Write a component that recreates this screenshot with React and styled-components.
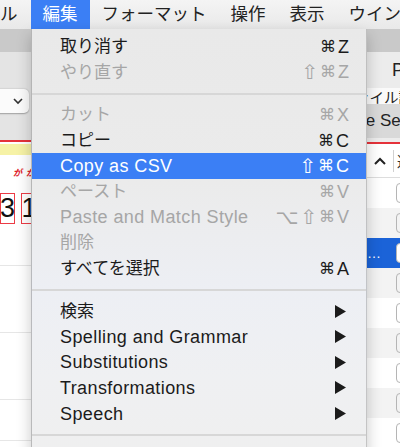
import styled, { createGlobalStyle } from 'styled-components'

const GlobalStyle = createGlobalStyle`
  html, body {
    margin: 0;
    padding: 0;
    overflow: hidden;
  }
  body {
    font-family: "Liberation Sans", "Noto Sans CJK JP", sans-serif;
    background: #ffffff;
  }
`

const blue = '#3b7ff5'

const Screen = styled.div`
  position: relative;
  width: 400px;
  height: 447px;
  overflow: hidden;
  display: flex;
  flex-direction: column;
`

// ---- barre de menu du haut
const MenuBar = styled.div`
  height: 29px;
  flex: none;
  display: flex;
  background: linear-gradient(#f4f4f4, #e9e9e9);
  white-space: nowrap;
`

const MenuTitle = styled.div`
  display: flex;
  align-items: center;
  padding: ${(props) => (props.$first ? '0 13px 0 0' : '0 12px')};
  font-size: 17.5px;
  line-height: 1;
  color: #222;
  ${(props) => props.$active && `background: ${blue}; color: #fff;`}
`

// ---- fenetre en arriere plan
const Window = styled.div`
  flex: 1;
  display: flex;
  min-height: 0;
`

const Column = styled.div`
  width: ${(props) => props.$width}px;
  flex: none;
  display: flex;
  flex-direction: column;
  overflow: hidden;
`

const Middle = styled.div`
  flex: 1;
  background: #eeeeee;
`

const Band = styled.div`
  height: ${(props) => props.$h}px;
  flex: none;
  background: ${(props) => props.$bg || 'transparent'};
  display: flex;
  align-items: center;
  overflow: hidden;
  white-space: nowrap;
  & > * {
    flex: none;
  }
`

const Dropdown = styled.div`
  width: 23px;
  height: 24px;
  margin-left: -8px;
  margin-top: 10px;
  padding-left: 8px;
  box-sizing: content-box;
  background: #fbfbfb;
  border-radius: 5px;
  box-shadow: 0 0.5px 1.5px rgba(0, 0, 0, 0.3);
  display: flex;
  align-items: center;
  justify-content: flex-end;
  padding-right: 6px;
`

const RedLine = styled.div`
  height: 2px;
  flex: none;
  background: #e5323a;
`

const RedHint = styled.span`
  font-size: 9px;
  font-weight: bold;
  font-style: italic;
  color: #e0202a;
  margin-left: ${(props) => props.$ml}px;
`

const CellBox = styled.div`
  width: ${(props) => props.$w}px;
  height: 29px;
  margin-left: ${(props) => props.$ml}px;
  border: 1.5px solid #ec3b45;
  display: flex;
  align-items: center;
  justify-content: center;
  font-size: 27px;
  color: #111;
`

const RowLine = styled.div`
  height: ${(props) => props.$h}px;
  flex: none;
  border-bottom: 1px solid #e6e6e6;
  background: #fff;
`

const SideText = styled.span`
  font-size: ${(props) => props.$size}px;
  color: #222;
  margin-left: ${(props) => props.$ml}px;
`

const HeaderCell = styled.div`
  height: 33px;
  flex: none;
  display: flex;
  align-items: center;
  background: #fff;
  border-bottom: 1px solid #dddddd;
  font-size: 15px;
  color: #333;
  white-space: nowrap;
  & > * {
    flex: none;
  }
`

const Caret = styled.svg`
  margin-left: 7px;
`

const HeaderDivider = styled.div`
  width: 1px;
  height: 22px;
  background: #d0d0d0;
  margin: 0 3px 0 7px;
`

const TableRow = styled.div`
  height: 30px;
  flex: none;
  display: flex;
  align-items: center;
  justify-content: space-between;
  background: ${(props) =>
    props.$selected ? '#1b63d8' : props.$odd ? '#f3f3f3' : '#ffffff'};
  color: #fff;
  font-size: 14px;
`

const Check = styled.div`
  width: 14px;
  height: 18px;
  margin-right: -12px;
  border: 1px solid #b5b5b5;
  border-radius: 4px;
  background: ${(props) => (props.$selected ? '#ffffff' : 'transparent')};
`

// ---- menu deroulant
const Menu = styled.div`
  position: absolute;
  left: 31px;
  top: 29px;
  width: 336px;
  bottom: -20px;
  padding-top: 5px;
  box-sizing: border-box;
  background: linear-gradient(#e9e9e9 0%, #ebebeb 35%, #edeff4 60%, #eff0f2 80%, #efefef 100%);
  border-left: 1px solid rgba(0, 0, 0, 0.22);
  border-right: 1px solid rgba(0, 0, 0, 0.18);
  box-shadow: 0 6px 14px rgba(0, 0, 0, 0.22);
`

const Item = styled.div`
  height: 25.6px;
  display: flex;
  align-items: center;
  justify-content: space-between;
  padding: 0 17px 0 28px;
  color: ${(props) => (props.$disabled ? '#a6a6a6' : '#1b1b1b')};
  ${(props) => props.$active && `background: ${blue}; color: #fff;`}
  white-space: nowrap;
`

const Label = styled.span`
  font-size: ${(props) => (props.$cjk ? '17px' : '18px')};
  letter-spacing: ${(props) => (props.$cjk ? '0' : '0.4px')};
  line-height: 1;
`

const Keys = styled.span`
  display: flex;
  align-items: center;
  gap: 2px;
  line-height: 1;
`

const Sym = styled.span`
  font-family: "DejaVu Sans", sans-serif;
  font-size: ${(props) => (props.$big ? '20px' : '16px')};
`

const Letter = styled.span`
  font-size: 18px;
`

const Separator = styled.div`
  height: 17px;
  display: flex;
  align-items: center;
  &::after {
    content: '';
    flex: 1;
    height: 2px;
    background: #d7d7d7;
  }
`

const Arrow = styled.svg`
  margin-right: 3px;
`

function Shortcut({ keys }) {
  return (
    <Keys>
      {keys.split('').map((k, i) =>
        /[A-Z]/.test(k) ? (
          <Letter key={i}>{k}</Letter>
        ) : (
          <Sym key={i} $big={k !== '⌘'}>
            {k}
          </Sym>
        )
      )}
    </Keys>
  )
}

const items = [
  { label: '取り消す', keys: '⌘Z' },
  { label: 'やり直す', keys: '⇧⌘Z', disabled: true },
  { sep: true },
  { label: 'カット', keys: '⌘X', disabled: true },
  { label: 'コピー', keys: '⌘C' },
  { label: 'Copy as CSV', keys: '⇧⌘C', active: true },
  { label: 'ペースト', keys: '⌘V', disabled: true },
  { label: 'Paste and Match Style', keys: '⌥⇧⌘V', disabled: true },
  { label: '削除', disabled: true },
  { label: 'すべてを選択', keys: '⌘A' },
  { sep: true },
  { label: '検索', sub: true },
  { label: 'Spelling and Grammar', sub: true },
  { label: 'Substitutions', sub: true },
  { label: 'Transformations', sub: true },
  { label: 'Speech', sub: true },
  { sep: true },
  { label: '自動入力を開始' },
]

function EditMenu() {
  return (
    <Menu>
      {items.map((it, i) =>
        it.sep ? (
          <Separator key={i} />
        ) : (
          <Item key={i} $disabled={it.disabled} $active={it.active}>
            <Label $cjk={/[^\x00-\x7f]/.test(it.label)}>{it.label}</Label>
            {it.keys && <Shortcut keys={it.keys} />}
            {it.sub && (
              <Arrow width="11" height="13" viewBox="0 0 11 13">
                <polygon points="0,0 11,6.5 0,13" fill="#1b1b1b" />
              </Arrow>
            )}
          </Item>
        )
      )}
    </Menu>
  )
}

const rows = [0, 1, 2, 3, 4, 5, 6, 7, 8]

export default function App() {
  return (
    <Screen>
      <GlobalStyle />
      <MenuBar>
        <MenuTitle $first>ル</MenuTitle>
        <MenuTitle $active>編集</MenuTitle>
        <MenuTitle>フォーマット</MenuTitle>
        <MenuTitle>操作</MenuTitle>
        <MenuTitle>表示</MenuTitle>
        <MenuTitle>ウインドウ</MenuTitle>
      </MenuBar>
      <Window>
        <Column $width={31}>
          <Band $h={23} $bg="#c9c9c9" />
          <Band $h={88} $bg="#e4e4e4">
            <Dropdown>
              <svg width="10" height="7" viewBox="0 0 10 7">
                <polyline points="1,1 5,5 9,1" fill="none" stroke="#333" strokeWidth="1.6" />
              </svg>
            </Dropdown>
          </Band>
          <RedLine />
          <Band $h={2} $bg="#ffffff" />
          <Band $h={11} $bg="#f6f2a6" />
          <Band $h={34} $bg="#ffffff">
            <RedHint $ml={13}>が</RedHint>
            <RedHint $ml={4}>が</RedHint>
          </Band>
          <Band $h={38} $bg="#ffffff">
            <CellBox $w={13} $ml={0}>3</CellBox>
            <CellBox $w={14} $ml={6}>1</CellBox>
          </Band>
          <RowLine $h={38} />
          <RowLine $h={66} />
          <RowLine $h={66} />
          <RowLine $h={40} />
        </Column>
        <Middle />
        <Column $width={33}>
          <Band $h={23} $bg="#c9c9c9" />
          <Band $h={36} $bg="#ececec">
            <SideText $size={18} $ml={25}>P</SideText>
          </Band>
          <Band $h={16} $bg="#fafafa">
            <SideText $size={14.5} $ml={-12}>ァイル設定</SideText>
          </Band>
          <Band $h={34} $bg="#d9d9d9">
            <SideText $size={17} $ml={-5}>le Settings</SideText>
          </Band>
          <Band $h={4} $bg="#ececec" />
          <RedLine />
          <HeaderCell>
            <Caret width="12" height="8" viewBox="0 0 12 8">
              <polyline points="1,7 6,2 11,7" fill="none" stroke="#222" strokeWidth="2" />
            </Caret>
            <HeaderDivider />
            <span>選択</span>
          </HeaderCell>
          {rows.map((r) => (
            <TableRow key={r} $odd={r % 2 === 1} $selected={r === 2}>
              <span>{r === 2 ? '…' : ''}</span>
              <Check $selected={r === 2} />
            </TableRow>
          ))}
        </Column>
      </Window>
      <EditMenu />
    </Screen>
  )
}
